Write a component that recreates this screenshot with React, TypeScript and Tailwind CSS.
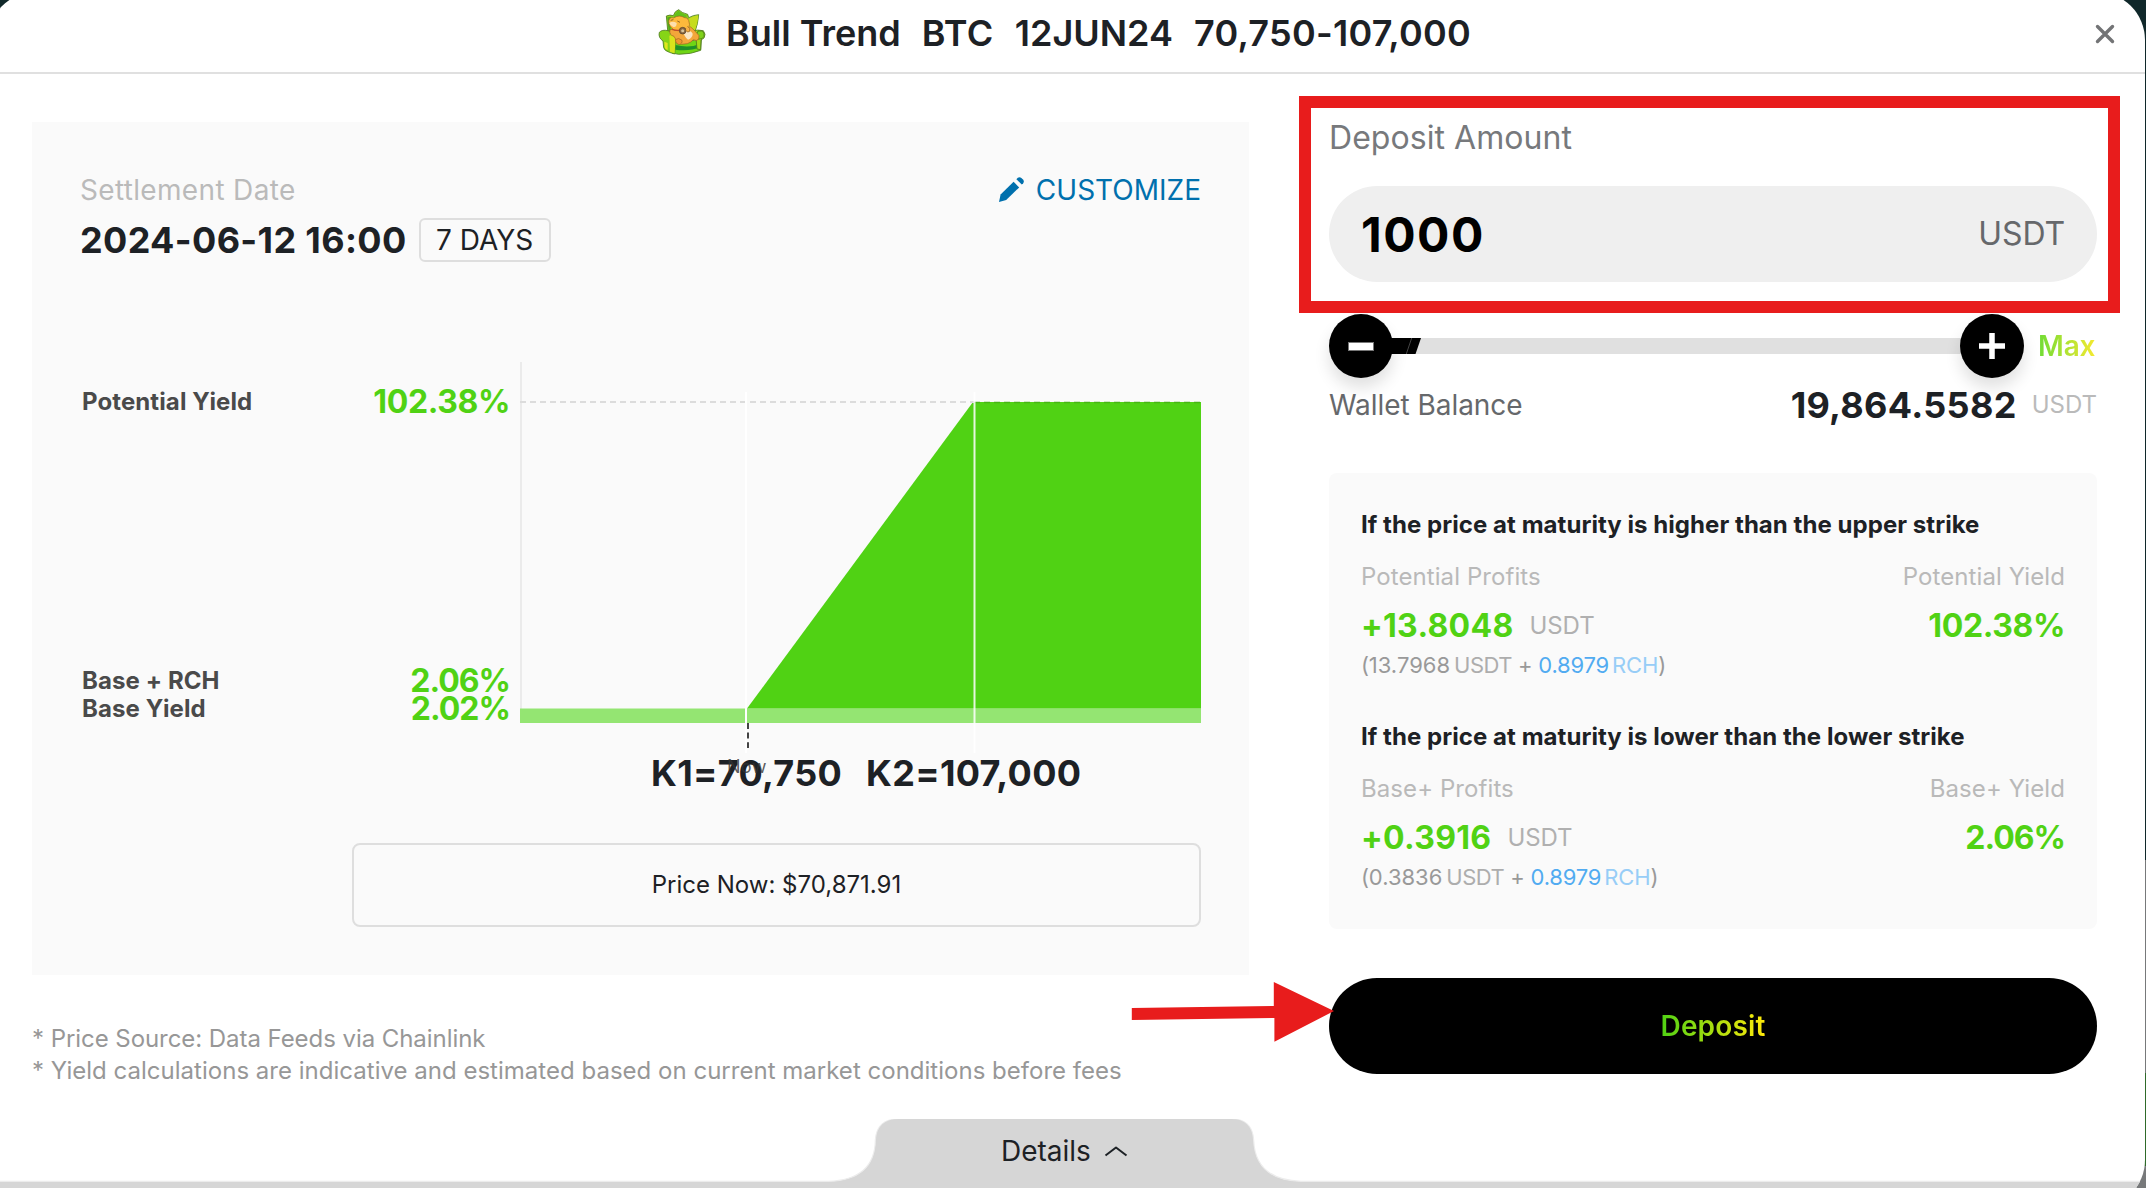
import React from "react";

function MascotIcon() {
  return (
    <svg viewBox="0 0 210 210" className="h-[70px] w-[70px] shrink-0" strokeLinejoin="round">
      <g stroke="#4d7a20" strokeWidth="2.5">
        <path d="M60 104 L55 51 Q66 46 76 50 Q80 36 92 32 Q101 42 119 46 L122 56 Q136 48 152 47 Q151 72 139 104 Z" fill="#8fd01a" />
        <path d="M118 62 Q136 50 151 49 Q150 72 138 102 L120 96 Z" fill="#c6dc1d" stroke="none" />
        <path d="M78 52 Q84 38 92 35 Q101 44 116 49 L114 60 L80 60 Z" fill="#62c01c" stroke="none" />
        <path d="M58 55 L70 53 L67 100 L62 100 Z" fill="#4fa81c" stroke="none" />
        <path d="M70 130 L160 122 L158 154 Q130 166 92 166 L72 162 Z" fill="#6fd515" />
        <path d="M82 138 Q126 148 158 134 L158 144 Q124 158 82 152 Z" fill="#1f8f2a" stroke="none" />
        <path d="M34 100 Q42 91 60 95 L82 103 Q90 116 82 130 L80 165 L64 160 Q48 154 47 146 L45 126 Q30 116 34 100 Z" fill="#86d417" />
        <path d="M130 96 Q150 91 166 95 Q175 106 168 117 L159 123 L158 152 L147 150 L144 118 Z" fill="#a6da18" />
        <path d="M150 96 Q164 93 168 102 Q171 114 162 119 L148 121 Q140 108 150 96 Z" fill="#7fd21a" />
        <path d="M64 110 Q78 104 84 116 L82 130 L80 163 L66 158 Z" fill="#d9e31c" stroke="none" />
        <path d="M49 128 L59 132 L59 153 Q50 150 50 143 Z" fill="#e2e61f" stroke="none" />
      </g>
      <g stroke="#9a641f" strokeWidth="2">
        <path d="M66 92 Q62 108 78 112 Q86 132 100 136 L118 134 Q130 130 136 122 Q146 128 152 120 Q156 108 148 104 Q138 92 128 84 Z" fill="#f3a63a" />
        <path d="M106 98 Q128 90 134 104 Q134 116 120 122 Q108 112 106 98 Z" fill="#fbe6c4" stroke="none" />
        <path d="M82 122 Q92 114 102 124 Q104 134 93 137 Q82 134 82 122 Z" fill="#f0962e" />
        <path d="M62 66 Q66 52 76 57 Q94 46 110 56 Q118 54 122 64 Q128 78 121 88 Q104 98 80 94 Q62 84 62 66 Z" fill="#fdb93c" />
        <path d="M64 72 Q74 64 86 72 Q86 86 76 84 Q66 80 64 72 Z" fill="#fddfae" stroke="none" />
        <path d="M68 64 L76 62 M88 66 L96 70" fill="none" stroke="#5c3a17" />
        <path d="M72 91 Q90 98 108 90" fill="none" stroke="#c14a2c" strokeWidth="3.5" />
        <circle cx="104" cy="95" r="10" fill="#8b6a45" stroke="#4d3a26" />
        <circle cx="104" cy="95" r="4.5" fill="#d8c39a" stroke="none" />
        <path d="M118 82 Q130 88 124 98 Q116 102 113 93" fill="#f8b044" />
      </g>
    </svg>
  );
}

function PayoffChart() {
  return (
    <svg viewBox="520 362 681 391" className="block h-[391px] w-[681px]">
      <rect x="520" y="362" width="2" height="347" fill="#ebebeb" />
      <rect x="520" y="708.5" width="681" height="14.5" fill="#94e572" />
      <path d="M747 708.5 L973 402 H1201 V708.5 Z" fill="#50d214" />
      <line x1="520" y1="402" x2="974" y2="402" stroke="#dcdcdc" strokeWidth="2" strokeDasharray="6 4" />
      <line x1="974" y1="402.5" x2="1201" y2="402.5" stroke="#47b516" strokeWidth="1.5" strokeDasharray="6 4" />
      <rect x="745" y="392" width="2" height="361" fill="#ffffff" />
      <rect x="973.5" y="392" width="2" height="361" fill="#ffffff" fillOpacity="0.85" />
      <line x1="748" y1="723" x2="748" y2="748" stroke="#444444" strokeWidth="2" strokeDasharray="6 3.6" />
    </svg>
  );
}

type Outcome = {
  title: string;
  profitLabel: string;
  yieldLabel: string;
  profit: string;
  yieldValue: string;
  base: string;
};

const outcomes: Outcome[] = [
  {
    title: "If the price at maturity is higher than the upper strike",
    profitLabel: "Potential Profits",
    yieldLabel: "Potential Yield",
    profit: "+13.8048",
    yieldValue: "102.38%",
    base: "13.7968",
  },
  {
    title: "If the price at maturity is lower than the lower strike",
    profitLabel: "Base+ Profits",
    yieldLabel: "Base+ Yield",
    profit: "+0.3916",
    yieldValue: "2.06%",
    base: "0.3836",
  },
];

function OutcomeBlock({ o }: { o: Outcome }) {
  return (
    <section className="whitespace-nowrap">
      <h3 className="text-[24px] leading-8 font-bold tracking-[0.05px] text-[#1d2125]">{o.title}</h3>
      <div className="mt-5 flex justify-between text-[24px] leading-8 tracking-[0.08px] text-[#b9b9b9]">
        <span>{o.profitLabel}</span>
        <span>{o.yieldLabel}</span>
      </div>
      <div className="mt-[13px] flex justify-between leading-10">
        <div className="flex items-center">
          <span className="text-[32px] font-bold tracking-[0.3px] text-[#50d214]">{o.profit}</span>
          <span className="ml-[16px] text-[24px] tracking-[-0.1px] text-[#b0b0b0]">USDT</span>
        </div>
        <span className={`text-[32px] font-bold text-[#50d214] ${o.yieldValue.length < 6 ? "tracking-[-1px]" : "tracking-[-0.4px]"}`}>{o.yieldValue}</span>
      </div>
      <div className="mt-[5px] text-[22px] leading-7 tracking-[-0.2px] text-[#999999]">
        (<span className="tracking-[0px]">{o.base}</span>
        <span className="ml-[4px] tracking-[-0.5px] text-[#adadad]">USDT</span> +{" "}
        <span className="text-[#51abf1]">0.8979</span>
        <span className="ml-[3px] tracking-[-0.1px] text-[#97cdf7]">RCH</span>)
      </div>
    </section>
  );
}

export default function App() {
  return (
    <div className="h-[1188px] w-[2146px] overflow-hidden bg-[linear-gradient(to_bottom,#10282a_0px,#10282a_860px,#77797a_860px,#77797a_1073px,#2f6a2a_1073px,#2f6a2a_1166px,#77797a_1166px)] font-['Inter',sans-serif]">
      <div className="relative -mt-2 -ml-3 flex h-[1216px] w-[2157px] flex-col overflow-hidden rounded-[48px] bg-white">
        <header className="flex h-[82px] shrink-0 items-center border-b-2 border-[#e0e0e0] pt-[3px] pr-[30px] pl-[660px] whitespace-nowrap">
          <MascotIcon />
          <h1 className="mb-[2px] ml-[8px] flex gap-[21px] text-[36px] leading-10 font-semibold text-[#1d2125]">
            <span>Bull Trend</span>
            <span className="tracking-[0.4px]">BTC</span>
            <span>12JUN24</span>
            <span className="tracking-[0.26px]">70,750-107,000</span>
          </h1>
          <button className="ml-auto" aria-label="Close">
            <svg viewBox="0 0 20 20" className="h-5 w-5" stroke="#737476" strokeWidth="3.4" strokeLinecap="round">
              <path d="M2.5 2.5 L17.5 17.5 M17.5 2.5 L2.5 17.5" />
            </svg>
          </button>
        </header>

        <main className="flex pl-11 whitespace-nowrap">
          <div className="w-[1217px] pt-12">
            <section className="h-[853px] bg-[#fafafa] px-12 pt-12">
              <div className="flex justify-between text-[28px] leading-10">
                <span className="tracking-[0.33px] text-[#bababa]">Settlement Date</span>
                <a className="flex items-center text-[#0070ad]">
                  <svg viewBox="0 0 25 25" className="mr-[12px] mb-[2px] h-[25px] w-[25px]" fill="currentColor">
                    <path d="M0 25 L1.6 17.6 L14.6 4.8 L20.2 10.4 L7.2 23 Z" />
                    <path d="M17.4 2.2 L18.8 0.8 Q20.6 -0.6 22.4 1 L24 2.6 Q25.6 4.4 24.2 6.2 L22.8 7.6 Z" />
                  </svg>
                  CUSTOMIZE
                </a>
              </div>
              <div className="mt-2 flex items-center">
                <span className="text-[36px] leading-[44px] font-bold tracking-[0.35px] text-[#1d2125]">2024-06-12 16:00</span>
                <span className="ml-[12px] flex h-[44px] w-[132px] items-center justify-center rounded-[6px] border-2 border-[#dedede] text-[28px] text-[#1d2125]">
                  7 DAYS
                </span>
              </div>

              <div className="mt-[100px] flex">
                <div className="w-[240px] pl-[2px] text-[24px] font-bold tracking-[0.1px] text-[#4a4a4a]">
                  <div className="mt-5 leading-10">Potential Yield</div>
                  <div className="mt-[245px] leading-7">Base + RCH</div>
                  <div className="leading-7">Base Yield</div>
                </div>
                <div className="w-[200px] pr-[10px] text-right text-[32px] font-bold tracking-[-0.4px] text-[#50d214]">
                  <div className="mt-5 leading-10">102.38%</div>
                  <div className="mt-[245px] leading-7 tracking-[-1px]">2.06%</div>
                  <div className="leading-7 tracking-[-1px]">2.02%</div>
                </div>
                <PayoffChart />
              </div>
              <div className="relative flex pl-[571px] text-[36px] leading-10 font-bold tracking-[0.3px] text-[#1d2125]">
                <span className="absolute top-[4px] left-[647px] text-[18px] leading-5 font-normal tracking-[0.3px] text-[#333333]/80">Now</span>
                <span className="w-[215px]">K1=70,750</span>
                <span>K2=107,000</span>
              </div>
              <div className="mt-[50px] ml-[272px] flex h-[84px] items-center justify-center rounded-[8px] border-2 border-[#dedede] text-[24px] text-[#1d2125]">
                Price Now: $70,871.91
              </div>
            </section>
            <footer className="mt-12 text-[24px] leading-8 text-[#979797]">
              <p className="tracking-[-0.06px]">* Price Source: Data Feeds via Chainlink</p>
              <p className="tracking-[0.015px]">* Yield calculations are indicative and estimated based on current market conditions before fees</p>
            </footer>
          </div>

          <div className="relative ml-20 w-[768px] pt-[44px]">
            <div className="absolute top-[22px] left-[-30px] h-[217px] w-[821px] border-12 border-[#e81c1c]" />
            <div className="text-[32px] leading-10 tracking-[0.05px] text-[#77797c]">Deposit Amount</div>
            <div className="mt-[28px] flex h-24 items-center justify-between rounded-full bg-[#efefef] px-8">
              <span className="pt-[2px] text-[48px] font-bold tracking-[1.5px] text-black">1000</span>
              <span className="text-[32px] tracking-[-0.1px] text-[#66686b]">USDT</span>
            </div>

            <div className="mt-8 flex h-16 items-center">
              <div className="z-10 flex h-16 w-16 shrink-0 items-center justify-center rounded-full bg-black shadow-[0_10px_16px_rgba(0,0,0,0.12)]">
                <span className="h-[9px] w-[26px] border border-[#777777] bg-white" />
              </div>
              <div className="-mx-6 h-4 flex-1 bg-[#e0e0e0]">
                <svg viewBox="0 0 52 16" className="block h-4 w-[52px]">
                  <path d="M0 0 H52 L46.5 16 H0 Z" fill="#000000" />
                  <path d="M42.7 0 L37.3 16" stroke="#555555" strokeWidth="0.8" />
                </svg>
              </div>
              <div className="z-10 flex h-16 w-16 shrink-0 items-center justify-center rounded-full bg-black shadow-[0_10px_16px_rgba(0,0,0,0.12)]">
                <svg viewBox="0 0 26 26" className="h-[26px] w-[26px]">
                  <path d="M13 0 V26 M0 13 H26" stroke="#ffffff" strokeWidth="5.5" />
                </svg>
              </div>
              <span className="ml-[14px] w-[59px] bg-[linear-gradient(90deg,#6fdc35,#f8ea30)] bg-clip-text text-[28px] leading-10 font-semibold tracking-[-0.2px] text-transparent">Max</span>
            </div>

            <div className="mt-[9px] flex h-9 items-center">
              <span className="text-[28px] tracking-[-0.05px] text-[#66686b]">Wallet Balance</span>
              <span className="ml-auto text-[36px] leading-9 font-bold tracking-[0.3px] text-[#1d2125]">19,864.5582</span>
              <span className="ml-[15px] text-[24px] text-[#bababa]">USDT</span>
            </div>

            <div className="mt-[50px] h-[456px] rounded-[8px] bg-[#fafafa] px-8 pt-9">
              <OutcomeBlock o={outcomes[0]} />
              <div className="h-[42px]" />
              <OutcomeBlock o={outcomes[1]} />
            </div>

            <button className="mt-[49px] flex h-24 w-full items-center justify-center rounded-full bg-black">
              <span className="bg-[linear-gradient(90deg,#50d214,#ffe90a)] bg-clip-text text-[28px] leading-10 font-semibold tracking-[0.15px] text-transparent">Deposit</span>
            </button>
          </div>
        </main>

        <svg viewBox="1131 980 205 64" className="absolute top-[988px] left-[1143px] h-[64px] w-[205px]" fill="#e81c1c">
          <path d="M1131.8 1008 L1273.8 1006 V982 L1334 1011 L1274.4 1041.8 V1018 L1131.8 1020 Z" />
        </svg>

        <div className="relative mt-auto -mb-2 h-[97px] shrink-0">
          <svg viewBox="-12 1119 2157 97" className="absolute inset-0 h-[97px] w-[2157px]">
            <path
              d="M-12 1181.5 H828 Q875 1180 875.5 1140 Q877 1119 899 1119 H1231 Q1252 1119 1253.5 1140 Q1255 1180 1301 1181.5 H2145 V1216 H-12 Z"
              fill="#d6d6d6"
              stroke="#ececec"
              strokeWidth="1.5"
            />
            <path
              d="M-12 1182 H828 Q875 1181 876 1140 Q877 1119 899 1119 H1231 Q1252 1119 1253 1140 Q1255 1181 1301 1182 H2145 V1216 H-12 Z"
              fill="#d6d6d6"
            />
          </svg>
          <div className="relative flex pt-[12px] pl-[1013px] text-[28px] leading-10 text-[#1d2125]">
            Details
            <svg viewBox="0 0 24 12" className="mt-[14px] ml-[13px] h-3 w-6" fill="none" stroke="#1d2125" strokeWidth="2">
              <path d="M1.5 10.5 L12 2.5 L22.5 10.5" strokeLinejoin="round" />
            </svg>
          </div>
        </div>
      </div>
    </div>
  );
}
